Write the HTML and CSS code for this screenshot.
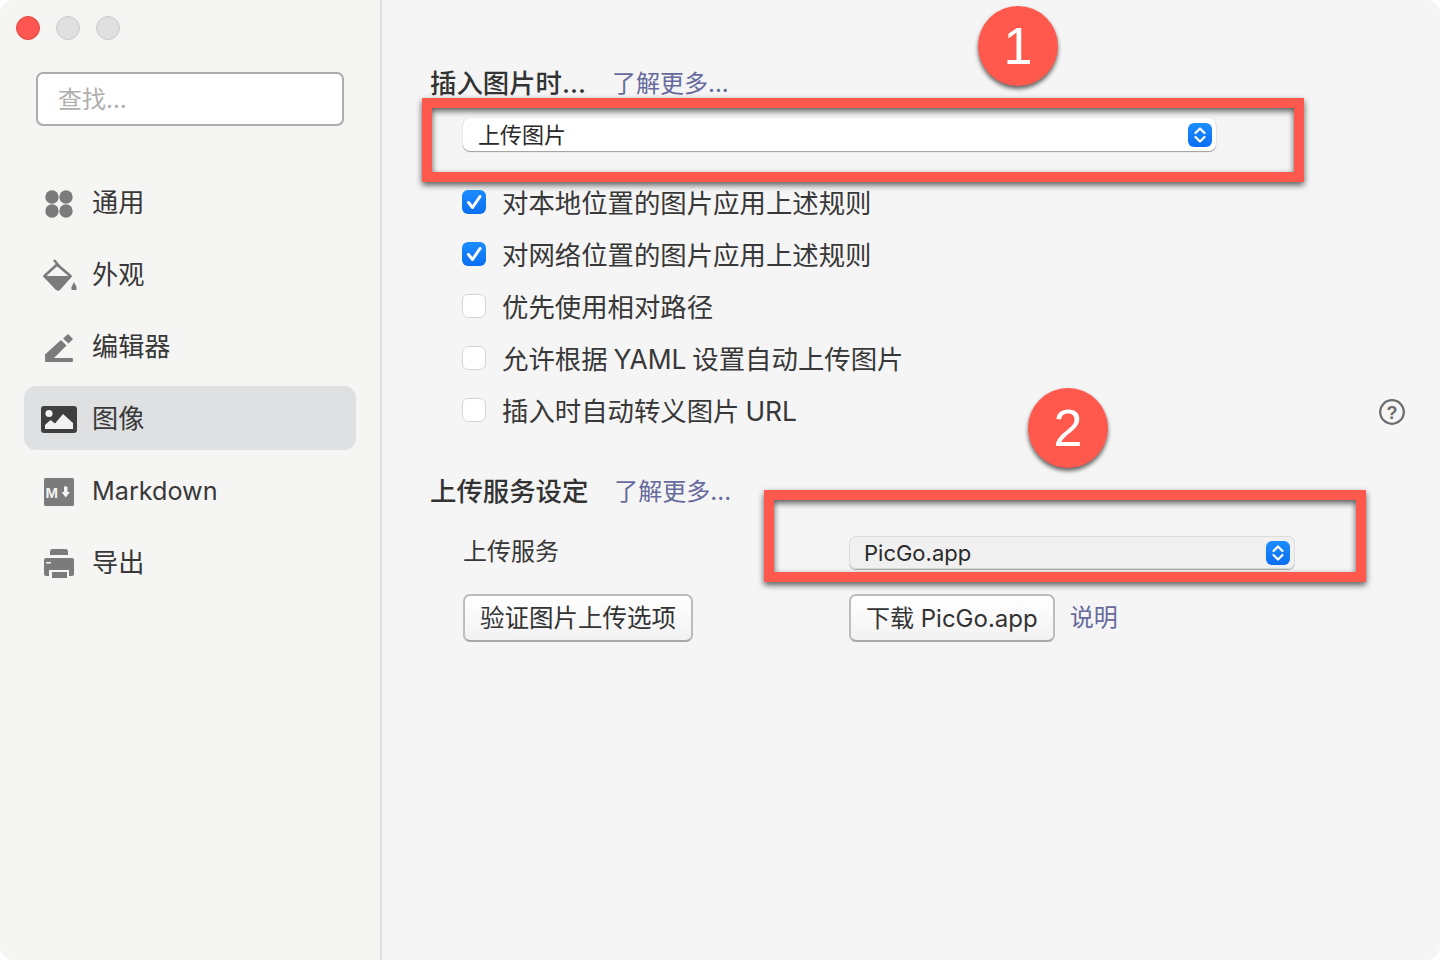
FILE: index.html
```html
<!DOCTYPE html>
<html lang="zh-CN">
<head>
<meta charset="utf-8">
<title>偏好设置</title>
<link rel="stylesheet" href="styles.css">
</head>
<body>
<div class="window">
  <aside class="sidebar">
    <div class="lights"><span class="light close"></span><span class="light"></span><span class="light"></span></div>
    <div class="search">查找...</div>
    <nav class="nav">
      <div class="nav-item">
        <svg class="nav-icon" viewBox="0 0 36 36"><g fill="#7b7b7b"><circle cx="11" cy="13" r="6.7"/><circle cx="25" cy="13" r="6.7"/><circle cx="11" cy="27" r="6.7"/><circle cx="25" cy="27" r="6.7"/></g></svg>
        <span class="cjk">通用</span>
      </div>
      <div class="nav-item">
        <svg class="nav-icon" viewBox="0 0 36 36"><path d="M3.500 20 16 8.500 29.500 20 17 33.500Z" fill="none" stroke="#7b7b7b" stroke-width="2.600" stroke-linejoin="round"/><path d="M2 20H31L19 34H15Z" fill="#7b7b7b"/><path d="M13 4l5 6" stroke="#7b7b7b" stroke-width="2.500" fill="none"/><path d="M33 26l2.500 5v3H30.500v-3Z" fill="#7b7b7b"/></svg>
        <span class="cjk">外观</span>
      </div>
      <div class="nav-item">
        <svg class="nav-icon" viewBox="0 0 36 36"><g fill="#7b7b7b"><path d="M4 30 4 26.500 20 12 25.500 17.500 13 30Z"/><path d="M22 10.500 27 6 32 11 27.500 15.500Z"/><rect x="4" y="30" width="28" height="4" rx="1"/></g></svg>
        <span class="cjk">编辑器</span>
      </div>
      <div class="nav-item active">
        <svg class="nav-icon" viewBox="0 0 36 36"><rect x="0" y="6" width="36" height="27" rx="3" fill="#3f3f3f"/><circle cx="8" cy="13.500" r="3.600" fill="#f2f2f2"/><path d="M4 29V25L9.500 20 14 23.500 22 14 32 23V29Z" fill="#f2f2f2"/></svg>
        <span class="cjk">图像</span>
      </div>
      <div class="nav-item">
        <svg class="nav-icon" viewBox="0 0 36 36"><rect x="3" y="6" width="30" height="28" rx="1.500" fill="#7b7b7b"/><text class="md-m" x="4.500" y="25.500">M</text><path d="M23 14.500h3.500v5.500h2.500l-4.250 5.500-4.250-5.500h2.500Z" fill="#f4f4f4"/></svg>
        <span class="latin">Markdown</span>
      </div>
      <div class="nav-item">
        <svg class="nav-icon" viewBox="0 0 36 36"><g fill="#7b7b7b"><path d="M9 11V7.500Q9 5 11.500 5H24.500Q27 5 27 7.500V11Z"/><path d="M5 14H31Q33 14 33 16V30Q33 32 31 32H28V26H8V32H5Q3 32 3 30V16Q3 14 5 14Z"/><rect x="11" y="28" width="15" height="6"/></g><rect x="5" y="18" width="5" height="1.500" fill="#f4f4f4"/></svg>
        <span class="cjk">导出</span>
      </div>
    </nav>
  </aside>

  <main class="main">
    <div class="section-title first">
      <h2>插入图片时...</h2><a class="link">了解更多...</a>
    </div>
    <div class="select white">
      <span class="select-cjk">上传图片</span>
      <span class="stepper"><svg viewBox="0 0 24 24"><path d="M7.500 10 12 5.500 16.500 10M7.500 14 12 18.500 16.500 14" fill="none" stroke="#fff" stroke-width="2.200" stroke-linecap="round" stroke-linejoin="round"/></svg></span>
    </div>
    <div class="options">
      <div class="option"><span class="check on"><svg viewBox="0 0 24 24"><path d="M6.500 12.500 10.500 17.500 18 6.500" fill="none" stroke="#fff" stroke-width="3" stroke-linecap="round" stroke-linejoin="round"/></svg></span><span class="option-text">对本地位置的图片应用上述规则</span></div>
      <div class="option"><span class="check on"><svg viewBox="0 0 24 24"><path d="M6.500 12.500 10.500 17.500 18 6.500" fill="none" stroke="#fff" stroke-width="3" stroke-linecap="round" stroke-linejoin="round"/></svg></span><span class="option-text">对网络位置的图片应用上述规则</span></div>
      <div class="option"><span class="check"></span><span class="option-text">优先使用相对路径</span></div>
      <div class="option"><span class="check"></span><span class="option-text">允许根据 YAML 设置自动上传图片</span></div>
      <div class="option"><span class="check"></span><span class="option-text">插入时自动转义图片 URL</span>
        <svg class="help" viewBox="0 0 26 26"><circle cx="13" cy="13" r="11.800" fill="none" stroke="#6b6b6b" stroke-width="2.200"/><text x="13" y="19.500" text-anchor="middle">?</text></svg>
      </div>
    </div>
    <div class="section-title second">
      <h2>上传服务设定</h2><a class="link">了解更多...</a>
    </div>
    <div class="service">
      <div class="service-label">上传服务</div>
      <div class="select grey">
        <span>PicGo.app</span>
        <span class="stepper"><svg viewBox="0 0 24 24"><path d="M7.500 10 12 5.500 16.500 10M7.500 14 12 18.500 16.500 14" fill="none" stroke="#fff" stroke-width="2.200" stroke-linecap="round" stroke-linejoin="round"/></svg></span>
      </div>
      <div class="service-left"><button class="btn">验证图片上传选项</button></div>
      <div class="service-right"><button class="btn btn-latin">下载 PicGo.app</button><a class="link plain">说明</a></div>
    </div>
  </main>

  <div class="frame frame-1"></div>
  <div class="frame frame-2"></div>
  <div class="badge badge-1">1</div>
  <div class="badge badge-2">2</div>
</div>
</body>
</html>
```

FILE: styles.css
```css
* { box-sizing: border-box; }
html, body { margin: 0; padding: 0; background: #fff; }
body {
  width: 1440px;
  height: 960px;
  overflow: hidden;
  font-family: "Inter", "Noto Sans CJK SC", sans-serif;
  color: #333;
}
.window {
  position: relative;
  display: flex;
  width: 1440px;
  height: 960px;
  border-radius: 14px;
  overflow: hidden;
  background: #f5f5f5;
}
.sidebar {
  flex: 0 0 382px;
  border-right: 2px solid #dedede;
  background: #f5f5f4;
  padding-top: 16px;
}
.lights { display: flex; gap: 16px; padding-left: 16px; height: 24px; }
.light {
  width: 24px;
  height: 24px;
  border-radius: 50%;
  background: #e0e0e0;
  border: 1px solid #cbcbcb;
}
.light.close { background: #fe5650; border-color: #e5443e; }
.search {
  margin: 32px 0 0 36px;
  width: 308px;
  height: 54px;
  border: 2px solid #acacac;
  border-radius: 7px;
  background: #fff;
  color: #b0b0b0;
  font-size: 24px;
  line-height: 52px;
  padding-left: 20px;
}
.nav { margin-top: 44px; display: flex; flex-direction: column; gap: 8px; padding: 0 24px; }
.nav-item {
  display: flex;
  align-items: center;
  gap: 15px;
  height: 64px;
  padding-left: 17px;
  border-radius: 12px;
  font-size: 26.200px;
  color: #383838;
}
.nav-item .cjk { padding-bottom: 3px; }
.nav-item .latin { font-size: 25.200px; padding-top: 2px; }
.nav-item.active { background: #dfe0e2; }
.nav-icon { flex: none; width: 36px; height: 36px; display: block; }
.md-m { font: 700 15px "Liberation Sans", sans-serif; fill: #f4f4f4; }

.main { flex: 1; padding: 69px 35px 0 48px; }
.section-title { display: flex; align-items: center; height: 28px; }
.section-title h2 { margin: 0; font-size: 26.400px; font-weight: 500; color: #333; line-height: 28px; }
.section-title .link { margin-left: 26px; padding-top: 2px; }
.section-title.second { margin-top: 41px; }
.link { font-size: 24px; color: #666a9c; line-height: 28px; }
.select {
  position: relative;
  display: flex;
  align-items: center;
  justify-content: space-between;
  height: 33px;
  border-radius: 7px;
  font-size: 22px;
  color: #2a2a2a;
  padding: 0 4px 0 15px;
  box-shadow: 0 1px 1px rgba(0, 0, 0, 0.35), 0 0 1px rgba(0, 0, 0, 0.2);
}
.select-cjk { padding-bottom: 4px; }
.select.white { margin: 21px 0 0 33px; width: 753px; background: #fff; }
.select.grey { padding-right: 5px; background: #f0f0f0; box-shadow: 0 1px 0 rgba(0, 0, 0, 0.3), inset 0 0 0 1px #dcdcdc; }
.stepper {
  flex: none;
  width: 24px;
  height: 24px;
  border-radius: 6px;
  background: linear-gradient(#1c8dff, #0a6ef2);
}
.stepper svg, .check svg { display: block; width: 24px; height: 24px; }
.options { margin: 25px 0 0 32px; }
.option { display: flex; align-items: center; gap: 16px; height: 52px; font-size: 26.400px; color: #383838; }
.option-text { padding-bottom: 2px; word-spacing: -1.500px; }
.check {
  flex: none;
  width: 24px;
  height: 24px;
  border-radius: 6px;
  background: #fff;
  border: 1px solid #d4d4d4;
}
.check.on { background: linear-gradient(#1c8dff, #0a6ef2); border: 0; }
.help { margin: 4px 0 0 auto; width: 26px; height: 26px; }
.help text { font: 700 18px "Liberation Sans", sans-serif; fill: #6b6b6b; }
.service {
  display: grid;
  grid-template-columns: 386px 446px;
  row-gap: 25px;
  align-items: center;
  margin: 31px 0 0 33px;
}
.service-label { font-size: 24px; line-height: 32px; color: #383838; padding-bottom: 1px; }
.service-right { display: flex; align-items: center; gap: 15px; }
.btn {
  height: 48px;
  padding: 0 15px 4px;
  border: 2px solid #bcbcbc;
  border-bottom-color: #a8a8a8;
  border-radius: 7px;
  background: linear-gradient(#fff, #f2f2f2);
  font-family: inherit;
  font-size: 24.500px;
  color: #333;
}
.btn-latin { font-size: 24px; }
.frame {
  position: absolute;
  border: 10px solid #ff584d;
  filter: drop-shadow(0 3px 3px rgba(0, 0, 0, 0.65));
}
.frame-1 { left: 422px; top: 98px; width: 882px; height: 84px; }
.frame-2 { left: 764px; top: 490px; width: 602px; height: 92px; }
.badge {
  position: absolute;
  width: 80px;
  height: 80px;
  border-radius: 50%;
  background: #ff584d;
  color: #fff;
  font: 52px/80px "Liberation Sans", sans-serif;
  text-align: center;
  box-shadow: 0 3px 4px rgba(0, 0, 0, 0.6);
}
.badge-1 { left: 978px; top: 6px; }
.badge-2 { left: 1028px; top: 388px; }
```
